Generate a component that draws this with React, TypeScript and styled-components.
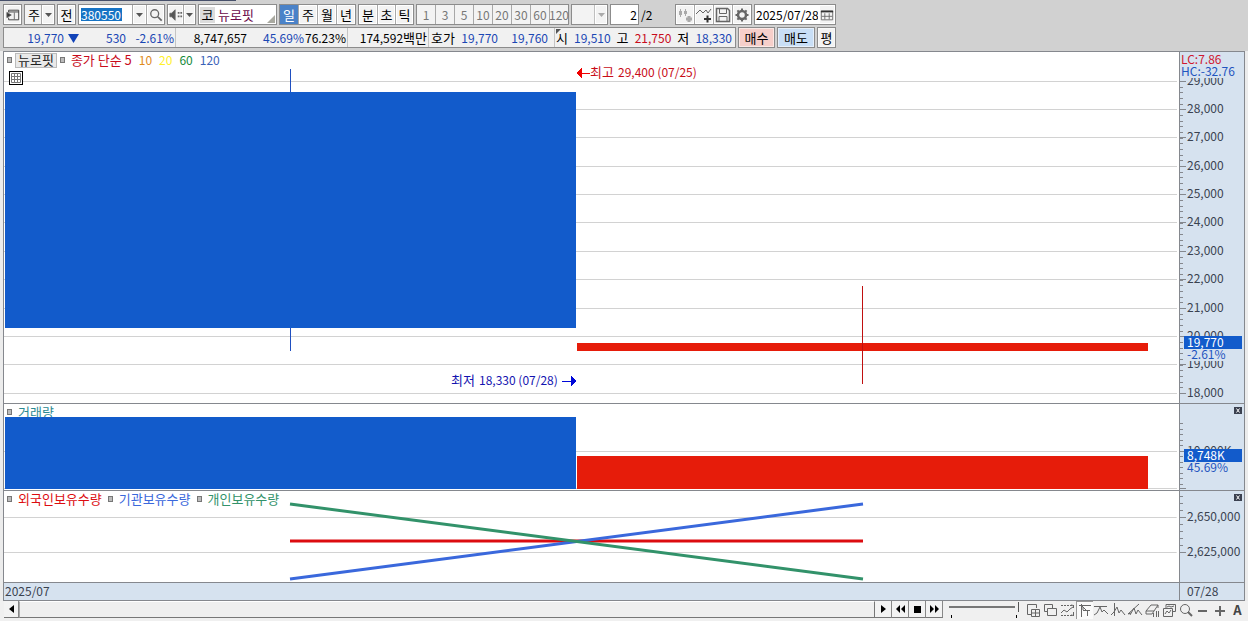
import React from "react";
import styled, { createGlobalStyle, css } from "styled-components";

const color = {
  up: "#c80c1c",
  down: "#1a47b4",
  candleUp: "#e61c0a",
  candleDown: "#125bcb",
  axis: "#d6e2ef",
  line: "#85888e",
  grid: "#d2d2d2",
  ink: "#3a4250",
};

const Global = createGlobalStyle`
  * { box-sizing: border-box; }
  body {
    margin: 0;
    background: #ececec;
    color: #000;
    font-family: "Noto Sans CJK KR", sans-serif;
    font-size: 13px;
    line-height: 16px;
  }
  button, input, select {
    margin: 0;
    padding: 0;
    border: 0;
    border-radius: 0;
    background: transparent;
    color: inherit;
    font: inherit;
  }
`;

const Page = styled.div`
  display: flex;
  flex-direction: column;
  min-height: 100vh;
`;

const Head = styled.header`
  height: 51px;
  padding: 4px 3px 0;
  background: #d1d1d1;
  position: relative;
`;

const TopStripe = styled.div`
  position: absolute;
  top: 0;
  left: 0;
  width: 236px;
  height: 1px;
  background: #47506a;
`;

const Bar = styled.div`
  display: flex;
  align-items: center;
  gap: 2px;
  height: 21px;
  margin-bottom: 2px;
`;

const Group = styled.div<{ $width?: number }>`
  display: flex;
  flex: none;
  height: 21px;
  width: ${(p) => (p.$width ? `${p.$width}px` : "auto")};
  border: 1px solid #8c8c8c;
  background: #f3f3f3;
`;

const Tool = styled.button<{ $w?: number; $tone?: "active" | "muted" }>`
  display: flex;
  flex: none;
  align-items: center;
  justify-content: center;
  width: ${(p) => p.$w ?? 19}px;
  height: 19px;
  white-space: nowrap;
  box-shadow: inset 0 0 0 1px #fff;
  & + & {
    border-left: 1px solid #a8a8a8;
  }
  ${(p) => p.$tone === "active" && css`background: #4a82c8; color: #fff; box-shadow: none;`}
  ${(p) => p.$tone === "muted" && css`color: #777; font-size: 12px; box-shadow: none;`}
`;

const Picker = styled.select<{ $w: number }>`
  appearance: none;
  width: ${(p) => p.$w}px;
  height: 19px;
  padding-left: 3px;
  border-right: 1px solid #a8a8a8;
`;

const CodeBox = styled.label`
  display: flex;
  align-items: center;
  flex: 1;
  padding-left: 2px;
  background: #fff;
  border-right: 1px solid #a8a8a8;
`;

const CodeInput = styled.input`
  width: 41px;
  height: 13px;
  background: #1673c4;
  color: #fff;
  font-size: 12px;
  line-height: 13px;
`;

const StockName = styled.div`
  position: relative;
  display: flex;
  align-items: center;
  gap: 3px;
  flex: 1;
  padding-left: 1px;
  background: #fff;
  color: #6c0a4a;
  white-space: nowrap;
  &::after {
    content: "";
    position: absolute;
    right: 1px;
    bottom: 1px;
    border-left: 8px solid transparent;
    border-bottom: 8px solid #a9a9a0;
  }
`;

const Market = styled.span`
  width: 15px;
  background: #dcdcdc;
  color: #000;
  text-align: center;
`;

const Field = styled.input<{ $w: number; $right?: boolean }>`
  width: ${(p) => p.$w}px;
  height: 19px;
  padding: 0 1px;
  background: #fff;
  font-size: 12px;
  text-align: ${(p) => (p.$right ? "right" : "left")};
`;

const PageTotal = styled.span`
  width: 32px;
  font-size: 12px;
`;

const Quote = styled.div`
  display: flex;
  align-items: center;
  flex: none;
  width: 733px;
  height: 21px;
  border: 1px solid #8c8c8c;
  background: #f1f1f1;
`;

const QuoteCell = styled.div<{ $w: number }>`
  position: relative;
  display: flex;
  align-items: center;
  justify-content: flex-end;
  width: ${(p) => p.$w}px;
  height: 19px;
  padding-right: 1px;
  white-space: nowrap;
  & + & {
    border-left: 1px solid #c4c4c4;
  }
`;

const Num = styled.span<{ $w: number; $c?: string }>`
  width: ${(p) => p.$w}px;
  color: ${(p) => p.$c ?? "#000"};
  font-size: 12px;
  text-align: right;
`;

const Tag = styled.span<{ $w: number }>`
  width: ${(p) => p.$w}px;
  text-align: right;
`;

const Corner = styled.i`
  position: absolute;
  left: 1px;
  top: 1px;
  border-top: 5px solid #555;
  border-right: 5px solid transparent;
`;

const Order = styled.button<{ $bg: string; $w: number }>`
  width: ${(p) => p.$w}px;
  height: 21px;
  border: 1px solid #8c8c8c;
  background: ${(p) => p.$bg};
  box-shadow: inset 0 0 0 1px #fff8;
`;

const Frame = styled.main`
  display: grid;
  flex: 1;
  grid-template-columns: minmax(0, 1fr) 65px;
  grid-template-rows: 352fr 87fr 92fr 18px;
  margin: 0 3px;
  border: 1px solid ${color.line};
  border-bottom: 0;
`;

const Plot = styled.section`
  position: relative;
  border-bottom: 1px solid ${color.line};
  background: #fff;
`;

const Axis = styled.div`
  position: relative;
  border-left: 1px solid ${color.line};
  border-bottom: 1px solid ${color.line};
  background: ${color.axis};
  color: ${color.ink};
  font-size: 12px;
`;

const Canvas = styled.svg`
  position: absolute;
  inset: 0;
  width: 100%;
  height: 100%;
  overflow: hidden;
`;

const Legend = styled.div`
  position: relative;
  display: flex;
  align-items: center;
  gap: 6px;
  padding-left: 3px;
  height: 16px;
  line-height: 14px;
  white-space: nowrap;
`;

const Dot = styled.i`
  width: 5px;
  height: 6px;
  border: 1px solid #777;
  background: #bbb;
`;

const Label = styled.span<{ $c: string }>`
  padding-bottom: 1px;
  color: ${(p) => p.$c};
`;

const Period = styled.span<{ $c: string }>`
  margin-left: 1px;
  padding-bottom: 1px;
  color: ${(p) => p.$c};
  font-size: 12px;
`;

const NameTag = styled.span`
  height: 15px;
  margin: 0 -3px;
  padding: 0 2px;
  border: 1px solid #bbb;
  background: #e9e9e9;
  color: #222;
  line-height: 12px;
`;

const GridButton = styled.button`
  position: absolute;
  left: 5px;
  top: 19px;
  width: 14px;
  height: 14px;
  border: 1px solid #000;
  background: #fff;
  & svg { display: block; }
`;

const Close = styled.button`
  position: absolute;
  top: 3px;
  right: 2px;
  width: 8px;
  height: 7px;
  background: #3b4150;
  & svg { display: block; }
`;

const DateCell = styled.div<{ $axis?: boolean }>`
  padding-left: ${(p) => (p.$axis ? 7 : 1)}px;
  border-left: ${(p) => (p.$axis ? `1px solid ${color.line}` : "0")};
  border-bottom: 1px solid ${color.line};
  background: ${color.axis};
  color: ${color.ink};
  font-size: 12px;
`;

const Foot = styled.footer`
  display: flex;
  align-items: flex-start;
  height: 20px;
  padding: 0 2px 0 4px;
  background: #f0f0f0;
`;

const Scroll = styled.div`
  flex: 1;
  height: 17px;
  border: 1px solid #777;
  border-top-color: #fff;
  border-left-color: #aaa;
  background: #efefef;
`;

const Step = styled.button<{ $w?: number }>`
  width: ${(p) => p.$w ?? 17}px;
  height: 17px;
  border-right: 1px solid #888;
  border-bottom: 1px solid #777;
  background: #f3f3f3;
  & svg { display: block; margin: 0 auto; }
`;

const Zoom = styled.label`
  position: relative;
  width: 82px;
  height: 17px;
  padding-left: 6px;
  &::after {
    content: "";
    position: absolute;
    left: 8px;
    right: 8px;
    bottom: 0;
    height: 3px;
    border-left: 1px solid #000;
    border-right: 1px solid #000;
  }
`;

const Range = styled.input`
  appearance: none;
  display: block;
  width: 70px;
  height: 11px;
  &::-webkit-slider-runnable-track {
    height: 2px;
    background: #777;
  }
  &::-webkit-slider-thumb {
    appearance: none;
    width: 4px;
    height: 10px;
    margin-top: -4px;
    border-right: 1px solid #555;
    background: #f0f0f0;
  }
`;

const FootTools = styled.div`
  display: flex;
`;

const FootTool = styled.button<{ $on?: boolean }>`
  width: 17px;
  height: 18px;
  color: #444;
  ${(p) => p.$on && css`background: #fafafa; box-shadow: inset 1px 1px 0 #999;`}
  & svg { display: block; }
`;

const Caret = ({ c = "#555" }: { c?: string }) => (
  <svg width="7" height="4" aria-hidden="true">
    <path d="M0 0H7L3.5 4Z" fill={c} />
  </svg>
);

type IconProps = { children: React.ReactNode; size?: number; stroke?: string };
const Icon = ({ children, size = 16, stroke = "#666" }: IconProps) => (
  <svg width={size} height={size} viewBox="0 0 16 16" fill="none" stroke={stroke} strokeWidth="1" aria-hidden="true">
    {children}
  </svg>
);

const PRICE = { w: 1175, h: 351 };
const VOLUME = { w: 1175, h: 86 };
const HOLD = { w: 1175, h: 91 };
const pc = (v: number, total: number) => `${(v / total) * 100}%`;

const GridLines = ({ ys, h }: { ys: number[]; h: number }) => (
  <>
    {ys.map((y) => (
      <rect key={y} x="0" y={pc(y, h)} width="99.8%" height="1" fill={color.grid} />
    ))}
  </>
);

type ScaleProps = { marks: { y: number; text?: string }[]; minor: number[]; h: number };
const Scale = ({ marks, minor, h }: ScaleProps) => (
  <>
    {minor.map((y) => (
      <rect key={y} x="0" y={pc(y, h)} width="3" height="1" fill={color.line} />
    ))}
    {marks.map((m) => (
      <React.Fragment key={m.y}>
        <rect x="0" y={pc(m.y, h)} width="6" height="1" fill={color.line} />
        {m.text && (
          <text x="7" y={pc(m.y, h)} dy="4" fill={color.ink}>{m.text}</text>
        )}
      </React.Fragment>
    ))}
  </>
);

const range = (from: number, to: number, step: number) => {
  const out: number[] = [];
  for (let v = from; v <= to; v += step) out.push(Math.round(v));
  return out;
};

const priceMarks = [29, 28, 27, 26, 25, 24, 23, 22, 21, 20, 19, 18].map((k, i) => ({
  y: Math.floor(29.1 + i * 28.37),
  text: `${k},000`,
}));

type BadgeProps = { y: number; h: number; value: string; change: string };
const Badge = ({ y, h, value, change }: BadgeProps) => (
  <svg x="0" y={pc(y, h)} overflow="visible">
    <rect x="7" y="13" width="53" height="12" fill={color.axis} />
    <rect x="4" y="0" width="58" height="13" fill={color.candleDown} />
    <text x="7" y="11" fill="#fff">{value}</text>
    <text x="7" y="23" fill="#1f55c0">{change}</text>
  </svg>
);

const CloseButton = () => (
  <Close aria-label="닫기">
    <svg width="8" height="7"><path d="M2.500 1.500L5.500 5.500M5.500 1.500L2.500 5.500" stroke="#fff" /></svg>
  </Close>
);

const holders = [
  { name: "외국인보유수량", c: "#dc0c10", from: 50, to: 50 },
  { name: "기관보유수량", c: "#3a68dc", from: 88, to: 13 },
  { name: "개인보유수량", c: "#32926a", from: 13, to: 88 },
];

const averages = [
  { n: 10, c: "#e08a1c" },
  { n: 20, c: "#fff02a" },
  { n: 60, c: "#148a3a" },
  { n: 120, c: "#3a62b8" },
];

const chartTools: { name: string; art: React.ReactNode; on?: boolean }[] = [
  { name: "창 추가", art: <><path d="M6 12.500H2.500V2.500H11.500V6" /><path d="M6.500 7.500H14.500V14.500H6.500ZM10.500 7.500V14.500M6.500 11H14.500" /></> },
  { name: "창 겹치기", art: <path d="M5 9.500H2.500V2.500H10.500V6M5.500 6.500H14.500V13.500H5.500Z" /> },
  { name: "영역", art: <><path d="M2 3.500H15M2 13.500H15" strokeDasharray="2 1" /><path d="M2 11L5 8L8 10L11 7L14 5M12 3L14.500 3.500V6M12 13L14.500 13.500V10" /></> },
  { name: "십자선", art: <path d="M3 3.500H15M5.500 2V15M6 4L11 9M7 5V8M7 8.500H14M11.500 9V14" />, on: true },
  { name: "추세", art: <path d="M1 4.500H14M1 13L4 11L7 5L9 10L11 8L15 12" /> },
  { name: "수직선", art: <path d="M4.500 1V14M1 13L4 10L7 5L9 11L11 8L15 13" /> },
  { name: "사선", art: <path d="M1 12L12 2M3 13L7 6L9 12L11 8L15 13M1 12L4 11" /> },
  { name: "전체 지우기", art: <><path d="M2 9L7 3H14L10 9ZM2 9V12H8L10 9M14 3V6" /><path d="M9.500 11V15M12.500 9V15M14.500 9V15" /></> },
  { name: "차트 저장", art: <><path d="M5 6V2.500H14.500V9.500H12M2.500 6.500H11.500V14.500H2.500Z" /><path d="M4 12L6 9L8 11L10 8M6 5L8 4L10 5L13 4" /></> },
  { name: "돋보기", art: <><circle cx="7" cy="7" r="4.500" /><path d="M10 10L14 14" strokeWidth="2" /></> },
  { name: "축소", art: <path d="M3 9H12" strokeWidth="2" /> },
  { name: "확대", art: <path d="M3 9H13M8 4V14" strokeWidth="2" /> },
];

export default function App() {
  return (
    <Page>
      <Global />
      <Head>
        <TopStripe />
        <Bar>
          <Group>
            <Tool $w={17} aria-label="메뉴">
              <Icon size={14}><path d="M3 5V2.500H14.500V13.500H3V11M3 4.500H14.500" stroke="#333" /><path d="M1 5V11L6 8Z" fill="#333" /><path d="M9.500 5V13" /></Icon>
            </Tool>
          </Group>
          <Group>
            <Picker $w={17} aria-label="구분" defaultValue="주"><option>주</option></Picker>
            <Tool $w={12} aria-label="구분 열기"><Caret /></Tool>
          </Group>
          <Group><Tool $w={17}>전</Tool></Group>
          <Group $width={87}>
            <CodeBox><CodeInput aria-label="종목코드" defaultValue="380550" /></CodeBox>
            <Tool $w={13} aria-label="최근 종목"><Caret /></Tool>
            <Tool $w={18} aria-label="종목 검색"><Icon size={14}><circle cx="6.500" cy="6.500" r="4.500" strokeWidth="1.500" /><path d="M10 10L14.500 14.500" strokeWidth="2" /></Icon></Tool>
          </Group>
          <Group>
            <Tool $w={15} aria-label="소리"><Icon size={14}><path d="M1 6H3L7 2V14L3 10H1Z" fill="#555" /><path d="M10 5.500H12M10 9.500H12M13 5.500H15M13 9.500H15" strokeWidth="2" /></Icon></Tool>
            <Tool $w={12} aria-label="소리 설정"><Caret /></Tool>
          </Group>
          <Group $width={79}><StockName><Market>코</Market>뉴로핏</StockName></Group>
          <Group>
            {["일", "주", "월", "년"].map((t, i) => (
              <Tool key={t} $w={i === 0 ? 18 : 19} $tone={i === 0 ? "active" : undefined}>{t}</Tool>
            ))}
          </Group>
          <Group>{["분", "초", "틱"].map((t) => <Tool key={t} $w={18}>{t}</Tool>)}</Group>
          <Group>
            {["1", "3", "5", "10", "20", "30", "60", "120"].map((t, i) => (
              <Tool key={t} $w={i === 0 ? 18 : 19} $tone="muted">{t}</Tool>
            ))}
          </Group>
          <Group>
            <Picker $w={23} aria-label="사용자 주기" disabled />
            <Tool $w={12} aria-label="주기 열기" disabled><Caret c="#aaa" /></Tool>
          </Group>
          <Group><Field $w={27} $right aria-label="페이지" defaultValue="2" /></Group>
          <PageTotal>/2</PageTotal>
          <Group>
            <Tool $w={18} aria-label="봉 추가"><Icon stroke="#aaa"><path d="M3.500 2V10M8.500 2V9" /><path d="M3.500 4V8M8.500 4V7M9 12H15M12 9V15" strokeWidth="3" /></Icon></Tool>
            <Tool aria-label="지표 추가"><Icon><path d="M0 7L4 3L7 6L10 3L12 6L15 2" /><path d="M8 12H15M11.500 8.500V15.500" stroke="#333" strokeWidth="2" /></Icon></Tool>
            <Tool aria-label="저장"><Icon><path d="M1.500 1.500H12.500L14.500 3.500V14.500H1.500Z" strokeWidth="1.500" /><path d="M4.500 2V6.500H11.500V2M4 14V9.500H12V14" /></Icon></Tool>
            <Tool aria-label="설정"><Icon><circle cx="8" cy="8" r="4" strokeWidth="2.500" /><path d="M8 1.500V4M8 12V14.500M1.500 8H4M12 8H14.500M3.400 3.400L5 5M11 11L12.600 12.600M3.400 12.600L5 11M11 5L12.600 3.400" strokeWidth="2" /></Icon></Tool>
          </Group>
          <Group>
            <Field $w={64} aria-label="날짜" defaultValue="2025/07/28" />
            <Tool $w={16} aria-label="달력"><Icon size={14}><path d="M1.500 3.500H14.500V13.500H1.500ZM5.500 6V13M10.500 6V13M2 9.500H14" /><path d="M1 4H15" strokeWidth="2" stroke="#333" /></Icon></Tool>
          </Group>
        </Bar>
        <Bar>
          <Quote>
            <QuoteCell $w={171}>
              <Num $w={60} $c={color.down}>19,770</Num>
              <Tag $w={15}><svg width="11" height="9" aria-hidden="true"><path d="M0 0H11L5.500 9Z" fill="#1243b8" /></svg></Tag>
              <Num $w={47} $c={color.down}>530</Num>
              <Num $w={48} $c={color.down}>-2.61%</Num>
            </QuoteCell>
            <QuoteCell $w={172}>
              <Num $w={71}>8,747,657</Num>
              <Num $w={57} $c={color.down}>45.69%</Num>
              <Num $w={42}>76.23%</Num>
            </QuoteCell>
            <QuoteCell $w={81}><Num $w={50}>174,592</Num>백만</QuoteCell>
            <QuoteCell $w={126}>
              <Tag $w={26}>호가</Tag>
              <Num $w={43} $c={color.down}>19,770</Num>
              <Num $w={50} $c={color.down}>19,760</Num>
              <Tag $w={5} />
            </QuoteCell>
            <QuoteCell $w={181}>
              <Corner />
              <Tag $w={13}>시</Tag><Num $w={43} $c={color.down}>19,510</Num>
              <Tag $w={18}>고</Tag><Num $w={43} $c={color.up}>21,750</Num>
              <Tag $w={18}>저</Tag><Num $w={43} $c={color.down}>18,330</Num>
              <Tag $w={2} />
            </QuoteCell>
          </Quote>
          <Order $w={37} $bg="#f6cfca">매수</Order>
          <Order $w={38} $bg="#c9dff6">매도</Order>
          <Order $w={19} $bg="#f3f3f3">평</Order>
        </Bar>
      </Head>

      <Frame>
        <Plot aria-label="주가">
          <Canvas shapeRendering="crispEdges">
            <GridLines ys={priceMarks.map((m) => m.y)} h={PRICE.h} />
            <rect x={pc(286, PRICE.w)} y={pc(17, PRICE.h)} width="1" height={pc(282, PRICE.h)} fill="#1f4fc0" />
            <rect x={pc(1, PRICE.w)} y={pc(40, PRICE.h)} width={pc(571, PRICE.w)} height={pc(236, PRICE.h)} fill={color.candleDown} />
            <rect x={pc(573, PRICE.w)} y={pc(291, PRICE.h)} width={pc(571, PRICE.w)} height={pc(8, PRICE.h)} fill={color.candleUp} />
            <rect x={pc(858, PRICE.w)} y={pc(234, PRICE.h)} width="1" height={pc(98, PRICE.h)} fill="#c01010" />
            <svg x={pc(572, PRICE.w)} y={pc(21, PRICE.h)} overflow="visible">
              <path d="M0 0L6 -5V5Z" fill="#f00000" />
              <path d="M6 0H14" stroke="#f00000" />
              <text x="14" y="4" fill="#c80c18">최고</text>
              <text x="42" y="4" fontSize="12" fill="#c80c18">29,400 (07/25)</text>
            </svg>
            <svg x={pc(573, PRICE.w)} y={pc(329, PRICE.h)} overflow="visible">
              <path d="M0 0L-6 -5V5Z" fill="#0008d8" />
              <path d="M-15 0H-6" stroke="#0008d8" />
              <text x="-126" y="4" fill="#1414b0">최저</text>
              <text x="-98" y="4" fontSize="12" fill="#1414b0">18,330 (07/28)</text>
            </svg>
          </Canvas>
          <Legend>
            <Dot /><NameTag>뉴로핏</NameTag><Dot />
            <Label $c={color.up}>종가 단순 5</Label>
            {averages.map((a) => <Period key={a.n} $c={a.c}>{a.n}</Period>)}
          </Legend>
          <GridButton aria-label="표 보기">
            <svg width="12" height="12"><path d="M1.500 1.500H10.500V10.500H1.500ZM4.500 2V10M7.500 2V10M2 4.500H10M2 7.500H10" fill="none" stroke="#777" /></svg>
          </GridButton>
        </Plot>
        <Axis>
          <Canvas>
            <Scale h={PRICE.h} minor={range(29, 346, 5.672)} marks={priceMarks} />
            <rect x="0" y="0" width="60" height={pc(26, PRICE.h)} fill={color.axis} />
            <text x="1" y="12" fill="#d01830">LC:7.86</text>
            <text x="1" y="24" fill="#1f55c0">HC:-32.76</text>
            <Badge h={PRICE.h} y={284} value="19,770" change="-2.61%" />
          </Canvas>
        </Axis>

        <Plot aria-label="거래량">
          <Legend><Dot /><Label $c="#2b8a93">거래량</Label></Legend>
          <Canvas shapeRendering="crispEdges">
            <GridLines ys={[47, 84]} h={VOLUME.h} />
            <rect x={pc(1, VOLUME.w)} y={pc(13, VOLUME.h)} width={pc(571, VOLUME.w)} height={pc(72, VOLUME.h)} fill={color.candleDown} />
            <rect x={pc(573, VOLUME.w)} y={pc(52, VOLUME.h)} width={pc(571, VOLUME.w)} height={pc(33, VOLUME.h)} fill={color.candleUp} />
          </Canvas>
        </Plot>
        <Axis>
          <Canvas>
            <Scale h={VOLUME.h} minor={range(19, 84, 5.5)} marks={[{ y: 47, text: "10,000K" }, { y: 84 }]} />
            <Badge h={VOLUME.h} y={45} value="8,748K" change="45.69%" />
          </Canvas>
          <CloseButton />
        </Axis>

        <Plot aria-label="보유수량">
          <Canvas>
            <GridLines ys={[26, 61]} h={HOLD.h} />
            {holders.map((s) => (
              <line key={s.name} x1={pc(286, HOLD.w)} x2={pc(859, HOLD.w)} y1={pc(s.from, HOLD.h)} y2={pc(s.to, HOLD.h)} stroke={s.c} strokeWidth="3" />
            ))}
          </Canvas>
          <Legend>
            {holders.map((s) => (
              <React.Fragment key={s.name}><Dot /><Label $c={s.c}>{s.name}</Label></React.Fragment>
            ))}
          </Legend>
        </Plot>
        <Axis>
          <Canvas>
            <Scale h={HOLD.h} minor={range(5, 61, 7)} marks={[{ y: 26, text: "2,650,000" }, { y: 61, text: "2,625,000" }]} />
          </Canvas>
          <CloseButton />
        </Axis>

        <DateCell>2025/07</DateCell>
        <DateCell $axis>07/28</DateCell>
      </Frame>

      <Foot>
        <Step $w={15} aria-label="왼쪽"><svg width="5" height="8"><path d="M5 0V8L0 4Z" /></svg></Step>
        <Scroll />
        <Step aria-label="재생"><svg width="5" height="8"><path d="M0 0V8L5 4Z" /></svg></Step>
        <Step aria-label="뒤로"><svg width="9" height="8"><path d="M4 0V8L0 4ZM9 0V8L5 4Z" /></svg></Step>
        <Step aria-label="정지"><svg width="7" height="7"><path d="M0 0H7V7H0Z" /></svg></Step>
        <Step aria-label="앞으로"><svg width="9" height="8"><path d="M0 0V8L4 4ZM5 0V8L9 4Z" /></svg></Step>
        <Zoom><Range type="range" aria-label="표시 개수" defaultValue="100" /></Zoom>
        <FootTools>
          {chartTools.map((t) => (
            <FootTool key={t.name} $on={t.on} aria-label={t.name}><Icon>{t.art}</Icon></FootTool>
          ))}
          <FootTool aria-label="글꼴"><b>A</b></FootTool>
        </FootTools>
      </Foot>
    </Page>
  );
}
